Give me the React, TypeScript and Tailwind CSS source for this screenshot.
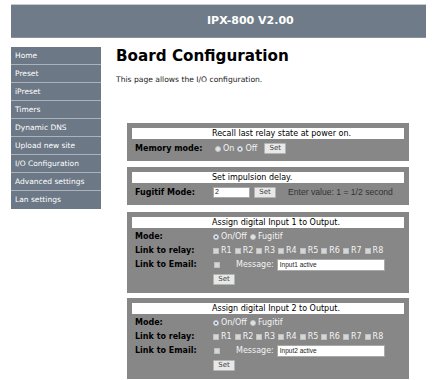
import React from 'react';

const MENU = [
  'Home',
  'Preset',
  'iPreset',
  'Timers',
  'Dynamic DNS',
  'Upload new site',
  'I/O Configuration',
  'Advanced settings',
  'Lan settings',
];

const Radio = ({ checked }: { checked?: boolean }) => (
  <span className="w-[6px] h-[6px] rounded-full bg-[#e2e2e2] border border-[#c4c4c4] flex items-center justify-center shrink-0">
    {checked && <span className="w-[2px] h-[2px] rounded-full bg-[#2f63b0]" />}
  </span>
);

const Check = () => (
  <span className="w-[6px] h-[6px] bg-[#d6d6d6] border border-[#c0c0c0] shrink-0" />
);

const SetButton = ({ className = '' }: { className?: string }) => (
  <span
    className={`w-[22px] h-[11px] bg-[#e8e8e8] border border-[#b4b4b4] rounded-[1px] text-[7px] leading-none text-[#444] flex items-center justify-center shrink-0 ${className}`}
  >
    Set
  </span>
);

const Panel = ({
  title,
  className = '',
  children,
}: {
  title: string;
  className?: string;
  children: React.ReactNode;
}) => (
  <div className={`bg-[#878787] px-[5px] pt-[5px] ${className}`}>
    <div className="bg-white h-[11px] pl-[80px] text-[8px] leading-[11px] text-black">{title}</div>
    <div className="pt-[2px]">{children}</div>
  </div>
);

const Row = ({ label, children, h = 'h-[14px]' }: { label: string; children?: React.ReactNode; h?: string }) => (
  <div className={`grid grid-cols-[81px_1fr] items-center ${h}`}>
    <span className="pl-[3px] text-[8px] font-bold text-black">{label}</span>
    <div className="flex items-center">{children}</div>
  </div>
);

const InputPanel = ({ n, className = '' }: { n: number; className?: string }) => (
  <Panel title={`Assign digital Input ${n} to Output.`} className={`pb-[6px] ${className}`}>
    <Row label="Mode:">
      <Radio checked />
      <span className="ml-[2px] text-[8px] text-[#f4f4f4]">On/Off</span>
      <span className="ml-[3px]" />
      <Radio />
      <span className="ml-[2px] text-[8px] text-[#f4f4f4]">Fugitif</span>
    </Row>
    <Row label="Link to relay:">
      <div className="flex items-center gap-[3px]">
        {[1, 2, 3, 4, 5, 6, 7, 8].map((r) => (
          <div key={r} className="flex items-center">
            <Check />
            <span className="ml-[2px] text-[8px] text-[#f4f4f4]">R{r}</span>
          </div>
        ))}
      </div>
    </Row>
    <Row label="Link to Email:">
      <span className="ml-[1px]" />
      <Check />
      <span className="ml-[16px] text-[8px] text-[#f4f4f4]">Message:</span>
      <div className="ml-[3px] w-[108px] h-[12px] bg-white border border-[#a8a8a8] pl-[2px] flex items-center text-[6.5px] text-[#222] font-['Liberation_Sans',sans-serif]">
        Input{n} active
      </div>
    </Row>
    <Row label="" h="h-[15px]">
      <SetButton />
    </Row>
  </Panel>
);

export default function App() {
  return (
    <div className="w-[437px] h-[380px] bg-white overflow-hidden px-[11px] pt-[4px] font-['DejaVu_Sans',sans-serif]">
      <div className="h-[34px] bg-[#6f7b88] border-t border-[#c5ccd3] border-b border-b-[#8a949e] flex items-center pl-[196px]">
        <span className="text-[11px] font-bold text-white">IPX-800 V2.00</span>
      </div>

      <div className="flex mt-[9px]">
        <nav className="w-[90px] shrink-0 flex flex-col">
          {MENU.map((item, i) => (
            <div
              key={item}
              className={`h-[18px] bg-[#6c7886] pl-[4px] flex items-center text-[7.5px] text-white ${
                i < MENU.length - 1 ? 'border-b border-[#aab3bc]' : ''
              }`}
            >
              {item}
            </div>
          ))}
        </nav>

        <main className="ml-[15px] flex-1">
          <h1 className="text-[15.2px] leading-[18px] font-bold text-black">Board Configuration</h1>
          <p className="mt-[10px] text-[7.6px] leading-[10px] text-[#222]">This page allows the I/O configuration.</p>

          <div className="ml-[11px] w-[282px] mt-[38px] flex flex-col">
            <Panel title="Recall last relay state at power on." className="pb-[5px]">
              <Row label="Memory mode:" h="h-[15px]">
                <span className="ml-[2px]" />
                <Radio />
                <span className="ml-[2px] text-[8px] text-[#f4f4f4]">On</span>
                <span className="ml-[3px]" />
                <Radio checked />
                <span className="ml-[2px] text-[8px] text-[#f4f4f4]">Off</span>
                <SetButton className="ml-[7px]" />
              </Row>
            </Panel>

            <Panel title="Set impulsion delay." className="pb-[5px] mt-[6px]">
              <Row label="Fugitif Mode:" h="h-[15px]">
                <div className="w-[37px] h-[11px] bg-white border border-[#a8a8a8] pl-[1px] flex items-center text-[7px] text-[#222] font-['Liberation_Sans',sans-serif]">
                  2
                </div>
                <SetButton className="ml-[4px] w-[20px]" />
                <span className="ml-[12px] whitespace-nowrap text-[8.6px] leading-none text-[#333] font-['Liberation_Sans',sans-serif]">
                  Enter value: 1 = 1/2 second
                </span>
              </Row>
            </Panel>

            <InputPanel n={1} className="mt-[7px]" />
            <InputPanel n={2} className="mt-[5px]" />
          </div>
        </main>
      </div>
    </div>
  );
}
